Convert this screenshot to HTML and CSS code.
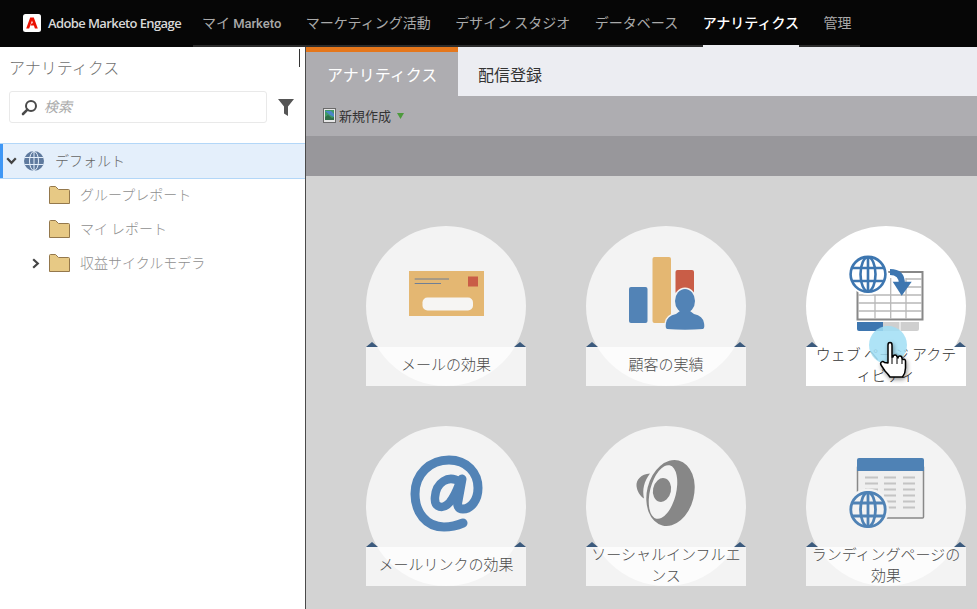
FILE: index.html
```html
<!DOCTYPE html>
<html lang="ja">
<head>
    <meta charset="UTF-8">
    <title>Adobe Marketo Engage</title>
    <link rel="stylesheet" href="styles.css">
</head>
<body>
    <header class="topbar">
        <div class="brand">
            <span class="brand-logo">
                <svg width="18" height="18" viewBox="0 0 18 18"><rect width="18" height="18" rx="2.5" fill="#fff"/><path d="M7.2 3.6h3.6l4 10.8h-2.9l-1-2.9H7.6l1-2.3h1.3L9 6.5l-2.8 7.9H3.2z" fill="#eb1000"/></svg>
            </span>
            <span class="brand-name">Adobe Marketo Engage</span>
        </div>
        <nav class="topnav">
            <a href="#">マイ <span class="latin">Marketo</span></a>
            <a href="#">マーケティング活動</a>
            <a href="#">デザイン スタジオ</a>
            <a href="#">データベース</a>
            <a href="#" class="active">アナリティクス</a>
            <a href="#">管理</a>
        </nav>
    </header>

    <div class="layout">
        <aside class="sidebar">
            <span class="sidebar-grip"></span>
            <div class="sidebar-title">アナリティクス</div>
            <div class="search-row">
                <div class="search-box">
                    <svg width="17" height="17" viewBox="0 0 17 17"><circle cx="10" cy="7" r="5" fill="none" stroke="#4a4a4a" stroke-width="2"/><path d="M6.4 10.6L2 15" stroke="#4a4a4a" stroke-width="2.6" stroke-linecap="round"/></svg>
                    <span>検索</span>
                </div>
                <svg class="filter" width="16" height="17" viewBox="0 0 16 17"><path d="M0 0h16L10 7.5V17l-4-2.5V7.5z" fill="#555"/></svg>
            </div>
            <div class="tree">
                <div class="tree-row selected">
                    <svg class="chevron" width="11" height="8" viewBox="0 0 11 8"><path d="M1.2 1.2l4.3 4.6 4.3-4.6" fill="none" stroke="#444" stroke-width="2.2"/></svg>
                    <svg width="22" height="22" viewBox="0 0 22 22" class="globe"><circle cx="11" cy="11" r="10" fill="#5f7a9e"/><g fill="none" stroke="#e4effb" stroke-width="1"><ellipse cx="11" cy="11" rx="4.5" ry="9.5"/><path d="M11 1v20M1.5 7.5h19M1.5 14.5h19"/></g></svg>
                    <span>デフォルト</span>
                </div>
                <div class="tree-row child">
                    <svg class="folder" width="21" height="18" viewBox="0 0 21 18"><path d="M.5 17.5V1.5q0-1 1-1h5l3 3h10q1 0 1 1v13z" fill="#e7c985" stroke="#94784c"/></svg>
                    <span>グループレポート</span>
                </div>
                <div class="tree-row child">
                    <svg class="folder" width="21" height="18" viewBox="0 0 21 18"><path d="M.5 17.5V1.5q0-1 1-1h5l3 3h10q1 0 1 1v13z" fill="#e7c985" stroke="#94784c"/></svg>
                    <span>マイ レポート</span>
                </div>
                <div class="tree-row child">
                    <svg class="chevron-right" width="8" height="11" viewBox="0 0 8 11"><path d="M1.2 1.2l4.6 4.3-4.6 4.3" fill="none" stroke="#444" stroke-width="2.2"/></svg>
                    <svg class="folder" width="21" height="18" viewBox="0 0 21 18"><path d="M.5 17.5V1.5q0-1 1-1h5l3 3h10q1 0 1 1v13z" fill="#e7c985" stroke="#94784c"/></svg>
                    <span>収益サイクルモデラ</span>
                </div>
            </div>
        </aside>

        <main class="main">
            <div class="tabs">
                <a href="#" class="tab active">アナリティクス</a>
                <a href="#" class="tab">配信登録</a>
            </div>
            <div class="toolbar">
                <svg width="13" height="15" viewBox="0 0 13 15"><rect x=".5" y=".5" width="12" height="14" fill="#e6e6e6" stroke="#6a6a6a"/><rect x="2" y="2" width="9" height="10" fill="#3f9a66"/><path d="M2 3h6l3 3v3L7 7z" fill="#4a86c8"/><path d="M2 9l3-2 4 3 2-1v3H2z" fill="#2f6f4a"/></svg>
                <span>新規作成</span>
                <svg class="toolbar-arrow" width="7" height="6" viewBox="0 0 7 6"><path d="M0 0h7L3.5 6z" fill="#4d9a3c"/></svg>
            </div>
            <div class="subbar"></div>

            <div class="cards">
                <div class="card">
                    <div class="circle">
                        <svg width="160" height="120" viewBox="0 0 160 120">
                            <rect x="43" y="45" width="75" height="45" fill="#e4b772"/>
                            <path d="M48.7 53H83M48.7 57.5H75" stroke="#6f7f95" stroke-width="1"/>
                            <rect x="102" y="50.5" width="10" height="10" fill="#c95d47"/>
                            <rect x="56.5" y="71.5" width="50.5" height="13" rx="5" fill="#f6f5f3"/>
                        </svg>
                    </div>
                    <div class="label">メールの効果</div>
                </div>

                <div class="card">
                    <div class="circle">
                        <svg width="160" height="120" viewBox="0 0 160 120">
                            <rect x="43" y="61" width="18.5" height="36" rx="2" fill="#5283b6"/>
                            <rect x="66.5" y="31" width="18.5" height="66" rx="2" fill="#e4b772"/>
                            <rect x="89.5" y="44" width="18.5" height="24" rx="2" fill="#c95d47"/>
                            <g fill="#f3f3f3" stroke="#f3f3f3" stroke-width="3">
                                <ellipse cx="99" cy="75" rx="10" ry="12"/>
                                <path d="M81 103q-2-1-1-6q1-7 10-9l4-3h10l4 3q9 2 10 9q1 5-1 6q-18 1.5-36 0z"/>
                            </g>
                            <ellipse cx="99" cy="75" rx="10" ry="12" fill="#5283b6"/>
                            <path d="M81 103q-2-1-1-6q1-7 10-9l4-3h10l4 3q9 2 10 9q1 5-1 6q-18 1.5-36 0z" fill="#5283b6"/>
                        </svg>
                    </div>
                    <div class="label">顧客の実績</div>
                </div>

                <div class="card hovered">
                    <div class="circle">
                        <svg width="160" height="120" viewBox="0 0 160 120">
                            <path d="M51.5 60V93.5H116.5V46H80" fill="#fff" stroke="#888" stroke-width="2"/>
                            <path d="M52 69H116M52 77H116M52 85H116M69 69V93M84.7 52V93M100 52V93M100 53H116M100 61H116" stroke="#b8b8b8" stroke-width="1.3"/>
                            <path d="M77 96h36v7q0 2-2 2H77z" fill="#cfcfcf"/>
                            <path d="M94 96v9" stroke="#fff"/>
                            <path d="M51 96h26v9H53q-2 0-2-2z" fill="#3d76b0"/>
                            <circle cx="62" cy="48.3" r="20.5" fill="#fff"/>
                            <g fill="none" stroke="#3d76b0" stroke-width="2.6">
                                <circle cx="62" cy="48.3" r="17.4"/>
                                <ellipse cx="62" cy="48.3" rx="7.5" ry="17"/>
                                <path d="M62 31v35M46 42h32M46 55h32"/>
                            </g>
                            <path d="M84 46C92 46 96 50 96 58" fill="none" stroke="#3d76b0" stroke-width="6"/>
                            <path d="M86.7 55.7H105.7L95.7 69.7z" fill="#3d76b0"/>
                        </svg>
                    </div>
                    <div class="label">ウェブ ページ アクティビティ</div>
                    <span class="pointer-glow"></span>
                    <svg class="pointer" width="28" height="38" viewBox="0 0 28 38">
                        <path d="M9 22V4q0-2.5 2-2.5T13 4v12l1 0q0-2 2-2t2 2l1 1q0-2 2-2t2 2.5l1 1q2-1 2.5 1.5v7q0 5-3 9H11q-2-3-5-6l-4-6q-1-2 .5-3t3 .5z" fill="#fff" stroke="#000" stroke-width="1.5" stroke-linejoin="round"/>
                        <path d="M13 16v7M18 17v6M23 18v5" stroke="#000" stroke-width="1"/>
                    </svg>
                </div>

                <div class="card">
                    <div class="circle">
                        <svg width="160" height="120" viewBox="0 0 160 120">
                            <g fill="none" stroke="#5283b6" stroke-width="9" stroke-linecap="round">
                                <path d="M97 97C90 100 84 101 78 101C60 101 49 86 49 68C49 48 64 34 83 34C101 34 112 47 112 62C112 74 105 83 97 83C92 83 91 79 92 75L96 53"/>
                                <path d="M94 56C82 48 70 57 69 71C68 82 77 84 84 76C89 70 91 64 94 56" stroke-width="8.5"/>
                            </g>
                        </svg>
                    </div>
                    <div class="label">メールリンクの効果</div>
                </div>

                <div class="card">
                    <div class="circle">
                        <svg width="160" height="120" viewBox="0 0 160 120">
                            <ellipse cx="84.5" cy="67" rx="23.5" ry="33.5" transform="rotate(14 84.5 67)" fill="#878787"/>
                            <ellipse cx="77" cy="66" rx="13" ry="27.5" transform="rotate(14 77 66)" fill="#f3f3f3"/>
                            <ellipse cx="76" cy="64" rx="9" ry="12" transform="rotate(12 76 64)" fill="#878787"/>
                            <path d="M64 47.5C55 48 50 54 50.5 60C51 65 54 70 58 72.5C56 64 58 55 64 47.5z" fill="#878787"/>
                        </svg>
                    </div>
                    <div class="label">ソーシャルインフルエンス</div>
                </div>

                <div class="card">
                    <div class="circle">
                        <svg width="160" height="120" viewBox="0 0 160 120">
                            <rect x="51.5" y="40" width="66" height="52" rx="1" fill="#efefef" stroke="#888" stroke-width="1.5"/>
                            <path d="M51 45v-11q0-2 2-2h63q2 0 2 2v11z" fill="#4f82b5"/>
                            <path d="M59 51.5h13M78 51.5h12M97 51.5h12M59 57.5h13M78 57.5h12M97 57.5h12M59 63.5h13M78 63.5h12M97 63.5h12M59 69.5h13M78 69.5h12M97 69.5h12M78 75.5h12M97 75.5h12M78 81.5h12M97 81.5h12" stroke="#c4c4c4" stroke-width="2"/>
                            <circle cx="62" cy="83.5" r="21" fill="#f3f3f3"/>
                            <g fill="none" stroke="#4f82b5" stroke-width="2.8">
                                <circle cx="62" cy="83.5" r="17.2"/>
                                <ellipse cx="62" cy="83.5" rx="7.5" ry="17"/>
                                <path d="M62 66v35M46 77h32M46 90h32"/>
                            </g>
                        </svg>
                    </div>
                    <div class="label">ランディングページの効果</div>
                </div>
            </div>
        </main>
    </div>
</body>
</html>
```

FILE: styles.css
```css
/* page */
html, body {
    height: 100%;
}

body {
    margin: 0;
    overflow: hidden;
    background-color: #fff;
    font-family: "Noto Sans CJK JP", "Noto Sans", sans-serif;
    color: #333;
}

a {
    text-decoration: none;
}

/* top bar */
.topbar {
    display: flex;
    height: 47px;
    background-color: #060606;
}

.brand {
    display: flex;
    align-items: center;
    width: 193px;
    padding: 0 0 1px 23px;
    box-sizing: border-box;
}

.brand-logo {
    display: flex;
    margin-right: 7px;
}

.brand-name {
    font-family: "Open Sans", sans-serif;
    font-size: 13px;
    font-weight: 600;
    letter-spacing: -0.6px;
    color: #d8d8d8;
    white-space: nowrap;
}

.topnav {
    display: flex;
    gap: 24.5px;
    padding: 0 8px 0 9px;
    border-bottom: 2px solid #2c2c2c;
}

.topnav a {
    display: block;
    line-height: 45px;
    height: 47px;
    box-sizing: border-box;
    font-size: 14px;
    color: #a9a9a9;
    white-space: nowrap;
}

.topnav .latin {
    font-family: Roboto, sans-serif;
    font-weight: 500;
    font-size: 13px;
}

.topnav a.active {
    color: #fff;
    font-weight: 500;
    border-bottom: 2px solid #ecedf2;
}

/* layout */
.layout {
    display: flex;
    height: 562px;
}

/* left tree */
.sidebar {
    position: relative;
    width: 306px;
    flex: none;
    box-sizing: border-box;
    border-right: 1px solid #4a4a4a;
}

.sidebar-grip {
    position: absolute;
    top: 2px;
    left: 299px;
    width: 1px;
    height: 18px;
    background-color: #333;
}

.sidebar-title {
    padding: 9px 0 0 9px;
    font-size: 16px;
    font-weight: 300;
    line-height: 23px;
    color: #707070;
}

.search-row {
    display: flex;
    align-items: center;
    margin: 12px 0 0 9px;
}

.search-box {
    display: flex;
    align-items: center;
    gap: 6px;
    width: 258px;
    height: 32px;
    box-sizing: border-box;
    padding-left: 11px;
    border: 1px solid #e9e9e9;
    border-radius: 3px;
    font-size: 14px;
    font-style: italic;
    color: #aaa;
}

.search-box span {
    margin-bottom: 2px;
}

.filter {
    margin-left: 11px;
}

.tree {
    margin-top: 20px;
}

.tree-row {
    display: flex;
    align-items: center;
    height: 34px;
    font-size: 14px;
    font-weight: 300;
    color: #8f8f8f;
}

.tree-row span {
    margin-bottom: 3px;
}

.tree-row.selected {
    height: 36px;
    box-sizing: border-box;
    padding-left: 3px;
    margin-bottom: -1px;
    background-color: #e4effb;
    border-top: 1px solid #b3d7f8;
    border-bottom: 1px solid #b3d7f8;
    box-shadow: inset 3px 0 0 #3f97f5;
    color: #666;
}

.chevron {
    margin-left: 3px;
}

.globe {
    margin-left: 6px;
    margin-right: 10px;
}

.tree-row.child {
    padding-left: 49px;
    position: relative;
}

.folder {
    margin-right: 10px;
}

.chevron-right {
    position: absolute;
    left: 32px;
}

/* right side */
.main {
    flex: 1;
    min-width: 0;
    background-color: #d3d3d3;
}

.tabs {
    display: flex;
    height: 49px;
    background-color: #ecedf2;
}

.tab {
    padding: 0 20px;
    font-size: 16px;
    line-height: 55px;
    color: #333;
}

.tab.active {
    width: 110px;
    padding: 0 21px;
    border-top: 5px solid #e5771c;
    background-color: #aeadb1;
    line-height: 45px;
    color: #fff;
    white-space: nowrap;
}

.toolbar {
    display: flex;
    align-items: center;
    height: 40px;
    padding-left: 17px;
    background-color: #aeadb1;
    font-size: 13px;
    color: #333;
}

.toolbar svg {
    margin-bottom: 1px;
}

.toolbar span {
    margin: 0 0 2px 3px;
}

.toolbar .toolbar-arrow {
    margin-left: 6px;
    margin-bottom: 1px;
}

.subbar {
    height: 40px;
    background-color: #98979b;
}

/* tiles */
.cards {
    display: grid;
    grid-template-columns: repeat(3, 160px);
    column-gap: 60px;
    row-gap: 40px;
    padding: 50px 0 0 60px;
}

.card {
    position: relative;
    width: 160px;
    height: 160px;
}

.card::before,
.card::after {
    content: "";
    position: absolute;
    top: 116px;
    width: 12px;
    height: 5px;
    background-color: #3b5a7d;
    clip-path: polygon(50% 0, 100% 100%, 0 100%);
}

.card::before {
    left: 0;
}

.card::after {
    right: 0;
}

.circle {
    width: 160px;
    height: 160px;
    border-radius: 50%;
    background-color: rgba(255, 255, 255, 0.72);
}

.circle svg {
    display: block;
}

.label {
    position: absolute;
    left: 0;
    bottom: 0;
    display: flex;
    align-items: center;
    justify-content: center;
    width: 160px;
    height: 39px;
    box-sizing: border-box;
    padding: 0 3px 6px;
    background-color: rgba(255, 255, 255, 0.72);
    font-size: 15px;
    font-weight: 300;
    line-height: 21px;
    line-break: anywhere;
    text-align: center;
    color: #4d4d4d;
}

.card.hovered .circle,
.card.hovered .label {
    background-color: #fff;
    color: #333;
}

.pointer-glow {
    position: absolute;
    left: 63px;
    top: 100px;
    width: 38px;
    height: 38px;
    border-radius: 50%;
    background-color: rgba(160, 222, 245, 0.85);
}

.pointer {
    position: absolute;
    left: 73px;
    top: 115px;
    filter: drop-shadow(1px 2px 2px rgba(0, 0, 0, 0.4));
}
```
